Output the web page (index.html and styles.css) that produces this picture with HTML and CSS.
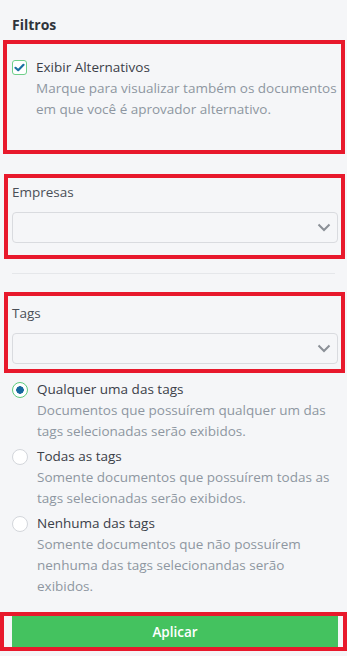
FILE: index.html
```html
<!DOCTYPE html>
<html lang="pt-BR">
<head>
    <meta charset="UTF-8">
    <meta name="viewport" content="width=device-width, initial-scale=1.0">
    <title>Filtros</title>
    <link rel="stylesheet" href="styles.css">
</head>
<body>
    <div class="panel">
        <h3 class="title">Filtros</h3>

        <div class="hl hl-alt">
            <label class="check-row">
                <span class="checkbox checked">
                    <svg width="11" height="9" viewBox="0 0 11 9"><path d="M1.5 4.8 L4.2 7.2 L9.5 1.8" fill="none" stroke="#1a6fa3" stroke-width="2.2" stroke-linecap="round" stroke-linejoin="round"/></svg>
                </span>
                <span class="opt-text">
                    <span class="opt-label">Exibir Alternativos</span>
                    <span class="opt-desc">Marque para visualizar também os documentos em que você é aprovador alternativo.</span>
                </span>
            </label>
        </div>

        <div class="hl hl-field hl-empresas">
            <div class="field-label">Empresas</div>
            <div class="select">
                <svg class="chevron" width="14" height="9" viewBox="0 0 14 9"><path d="M1.5 1.5 L7 7 L12.5 1.5" fill="none" stroke="#8b9097" stroke-width="2"/></svg>
            </div>
        </div>

        <hr class="sep">

        <div class="hl hl-field hl-tags">
            <div class="field-label">Tags</div>
            <div class="select">
                <svg class="chevron" width="14" height="9" viewBox="0 0 14 9"><path d="M1.5 1.5 L7 7 L12.5 1.5" fill="none" stroke="#8b9097" stroke-width="2"/></svg>
            </div>
        </div>

        <div class="radios">
            <label class="radio-row">
                <span class="radio selected"></span>
                <span class="opt-text">
                    <span class="opt-label">Qualquer uma das tags</span>
                    <span class="opt-desc">Documentos que possuírem qualquer um das tags selecionadas serão exibidos.</span>
                </span>
            </label>
            <label class="radio-row">
                <span class="radio"></span>
                <span class="opt-text">
                    <span class="opt-label">Todas as tags</span>
                    <span class="opt-desc">Somente documentos que possuírem todas as tags selecionadas serão exibidos.</span>
                </span>
            </label>
            <label class="radio-row">
                <span class="radio"></span>
                <span class="opt-text">
                    <span class="opt-label">Nenhuma das tags</span>
                    <span class="opt-desc">Somente documentos que não possuírem nenhuma das tags selecionandas serão exibidos.</span>
                </span>
            </label>
        </div>

        <div class="hl hl-btn">
            <button class="apply">Aplicar</button>
        </div>
    </div>
</body>
</html>
```

FILE: styles.css
```css
* {
    box-sizing: border-box;
    margin: 0;
    padding: 0;
}
body {
    font-family: 'Open Sans', 'Noto Sans', sans-serif;
    background: #f5f6f8;
    color: #3b4048;
    font-size: 13.5px;
    line-height: 21px;
}
.panel {
    padding-top: 14px;
}
.title {
    font-size: 14px;
    font-weight: 700;
    line-height: 22px;
    color: #2f343b;
    padding: 0 12px;
}
.hl {
    border: 4px solid #e8192c;
}
.hl-alt {
    margin: 4px 2px 0 3px;
    padding: 13px 4px 30px 5px;
}
.hl-field {
    margin: 20px 2px 0 4px;
}
.hl-empresas {
    padding: 4px 3px 12px 4px;
}
.hl-tags {
    margin-top: 18px;
    padding: 7px 3px 5px 4px;
}
.check-row,
.radio-row {
    display: flex;
    align-items: flex-start;
    gap: 9px;
}
.checkbox {
    flex: none;
    width: 15px;
    height: 15px;
    margin-top: 3px;
    border: 1px solid #6fcf8a;
    border-radius: 3px;
    background: #fff;
    display: flex;
    align-items: center;
    justify-content: center;
}
.opt-text {
    display: flex;
    flex-direction: column;
}
.opt-label {
    color: #3b4048;
}
.opt-desc {
    color: #8e96a1;
}
.field-label {
    color: #4a4f57;
    margin-bottom: 9px;
}
.select {
    height: 31px;
    border: 1px solid #d9dbdf;
    border-radius: 4px;
    background: #f5f6f8;
    display: flex;
    align-items: center;
    justify-content: flex-end;
    padding-right: 6px;
}
.sep {
    border: none;
    border-top: 1px solid #e5e7ea;
    margin: 14px 12px 0;
}
.radios {
    padding: 6px 12px 0;
    display: flex;
    flex-direction: column;
    gap: 4px;
}
.radio {
    flex: none;
    width: 16px;
    height: 16px;
    margin-top: 3px;
    border: 1px solid #d3d6db;
    border-radius: 50%;
    background: #fff;
}
.radio.selected {
    border-color: #5ccb7c;
    background: radial-gradient(circle, #15679e 0 3.5px, #fff 4px);
}
.hl-btn {
    margin-top: 15px;
    padding: 0 5px 0 8px;
}
.apply {
    display: block;
    width: 100%;
    height: 31px;
    border: none;
    background: #44c25f;
    color: #fff;
    font-family: inherit;
    font-size: 13.5px;
    font-weight: 600;
}
```
